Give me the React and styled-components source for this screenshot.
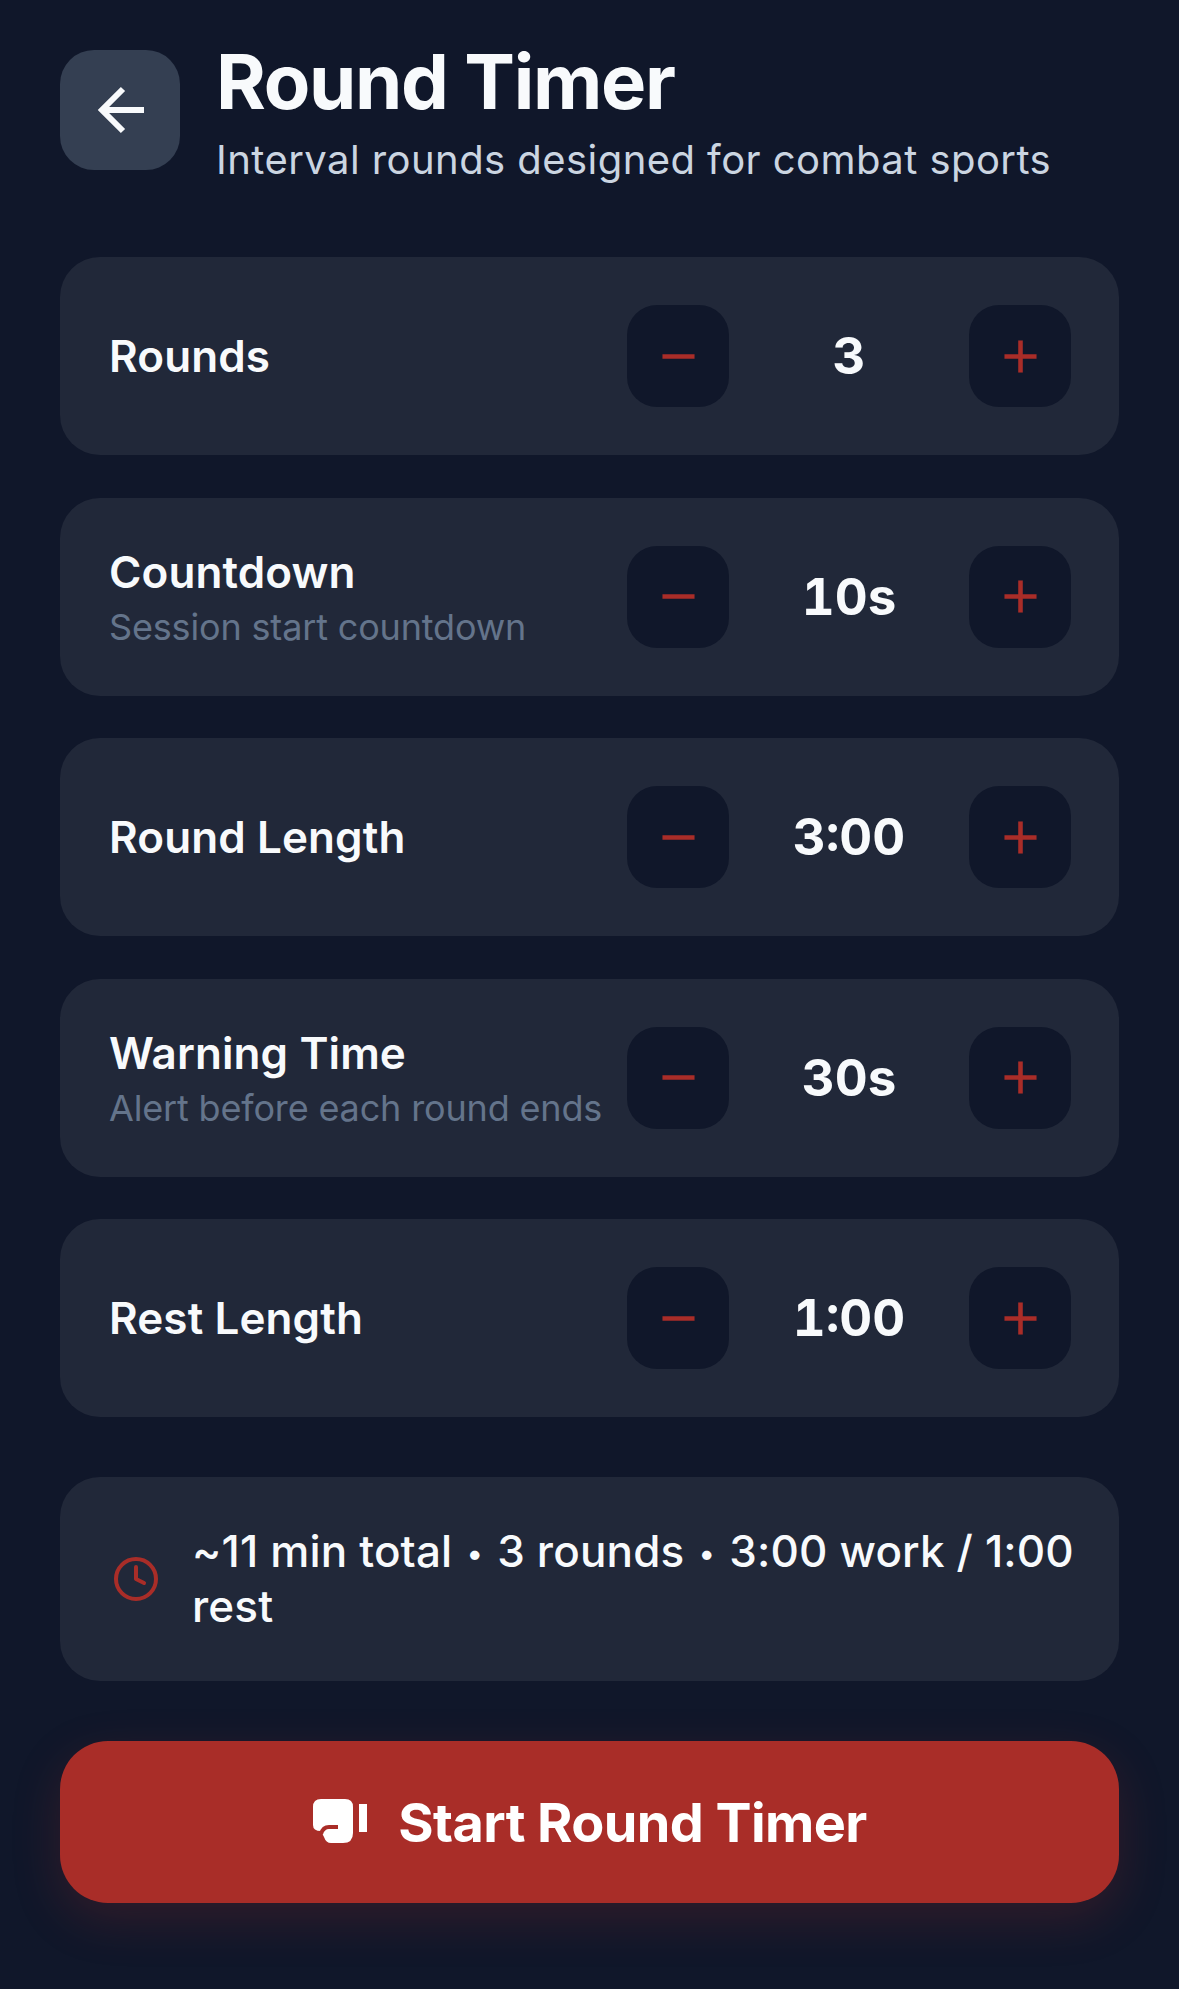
import React from 'react'
import styled, { createGlobalStyle } from 'styled-components'
import { ArrowLeft, Clock, Minus, Plus } from 'lucide-react'

const Red = '#a92d28'
const Ink = '#10172a'
const Panel = '#212839'

const GlobalStyle = createGlobalStyle`
  html, body {
    margin: 0;
    padding: 0;
    background: ${Ink};
  }
  * {
    box-sizing: border-box;
  }
`

const Page = styled.div`
  width: 1179px;
  height: 1989px;
  padding: 42px 60px 0;
  background: ${Ink};
  font-family: Inter, 'Liberation Sans', sans-serif;
  color: #f8fafc;
  overflow: hidden;
`

const Header = styled.header`
  display: flex;
  align-items: flex-start;
  gap: 36px;
  margin-bottom: 72px;
`

const BackButton = styled.button`
  width: 120px;
  height: 120px;
  margin-top: 8px;
  padding: 0 0 0 5px;
  flex: none;
  display: flex;
  align-items: center;
  justify-content: center;
  border: 0;
  border-radius: 34px;
  background: #343f52;
  color: #f8fafc;
`

const HeaderText = styled.div`
  display: flex;
  flex-direction: column;
`

const Title = styled.h1`
  margin: 0;
  font-size: 76px;
  line-height: 78px;
  font-weight: 700;
  letter-spacing: -1.3px;
`

const Subtitle = styled.p`
  margin: 15px 0 0;
  font-size: 40px;
  line-height: 50px;
  font-weight: 400;
  color: #cbd5e1;
  letter-spacing: 0.44px;
`

const Rows = styled.div`
  display: flex;
  flex-direction: column;
  gap: 42.5px;
`

const Row = styled.div`
  height: 198px;
  padding: 0 48px 0 49px;
  display: flex;
  align-items: center;
  justify-content: space-between;
  border-radius: 40px;
  background: ${Panel};
`

const LabelBlock = styled.div`
  display: flex;
  flex-direction: column;
`

const Label = styled.div`
  font-size: 44px;
  line-height: 54px;
  font-weight: 600;
  letter-spacing: 0.1px;
`

const Hint = styled.div`
  margin-top: 6px;
  font-size: 36px;
  line-height: 44px;
  font-weight: 400;
  color: #64748b;
  letter-spacing: -0.16px;
  white-space: nowrap;
`

const Stepper = styled.div`
  width: 444px;
  flex: none;
  display: flex;
  align-items: center;
`

const StepButton = styled.button`
  width: 102px;
  height: 102px;
  flex: none;
  display: flex;
  align-items: center;
  justify-content: center;
  border: 0;
  border-radius: 30px;
  background: ${Ink};
  color: ${Red};
`

const Value = styled.div`
  flex: 1;
  text-align: center;
  font-size: 51px;
  line-height: 60px;
  font-weight: 700;
  font-variant-numeric: tabular-nums;
`

const Summary = styled.div`
  height: 204px;
  margin-top: 60px;
  padding: 0 30px 0 52px;
  display: flex;
  align-items: center;
  gap: 32px;
  border-radius: 40px;
  background: ${Panel};
  color: ${Red};
`

const SummaryText = styled.div`
  font-size: 44px;
  line-height: 53px;
  font-weight: 500;
  color: #f8fafc;
  letter-spacing: 0.15px;
  white-space: nowrap;
`

const Dot = styled.span`
  font-size: 30px;
  margin: 0 2.5px;
  vertical-align: 3px;
`

const StartButton = styled.button`
  width: 100%;
  height: 162px;
  margin-top: 60px;
  display: flex;
  align-items: center;
  justify-content: center;
  gap: 30px;
  border: 0;
  border-radius: 48px;
  background: ${Red};
  box-shadow: 0 16px 48px rgba(169, 45, 40, 0.22);
  font-family: inherit;
  font-size: 54px;
  font-weight: 700;
  letter-spacing: -0.6px;
  color: #fff;
`

const settings = [
  { label: 'Rounds', value: '3' },
  { label: 'Countdown', hint: 'Session start countdown', value: '10s' },
  { label: 'Round Length', value: '3:00' },
  { label: 'Warning Time', hint: 'Alert before each round ends', value: '30s' },
  { label: 'Rest Length', value: '1:00' },
]

function Glove() {
  return (
    <svg width="56" height="48" viewBox="0 0 56 48" aria-hidden="true">
      <path
        d="M9 1H33Q41 1 41 9V35Q41 45 31 45H19Q14 45 12 39L9 33Q1 33 1 27V9Q1 1 9 1Z"
        fill="#fff"
      />
      <path
        d="M26 29H17Q11 29 9 36"
        fill="none"
        stroke={Red}
        strokeWidth="4"
      />
      <rect x="47" y="6" width="8" height="28" fill="#fff" />
    </svg>
  )
}

export default function App() {
  return (
    <Page>
      <GlobalStyle />
      <Header>
        <BackButton>
          <ArrowLeft size={72} strokeWidth={2} strokeLinecap="butt" strokeLinejoin="miter" />
        </BackButton>
        <HeaderText>
          <Title>Round Timer</Title>
          <Subtitle>Interval rounds designed for combat sports</Subtitle>
        </HeaderText>
      </Header>
      <Rows>
        {settings.map((s) => (
          <Row key={s.label}>
            <LabelBlock>
              <Label>{s.label}</Label>
              {s.hint && <Hint>{s.hint}</Hint>}
            </LabelBlock>
            <Stepper>
              <StepButton>
                <Minus size={55} strokeWidth={2} strokeLinecap="butt" />
              </StepButton>
              <Value>{s.value}</Value>
              <StepButton>
                <Plus size={55} strokeWidth={2} strokeLinecap="butt" />
              </StepButton>
            </Stepper>
          </Row>
        ))}
      </Rows>
      <Summary>
        <Clock size={48} strokeWidth={2} style={{ flex: 'none' }} />
        <SummaryText>
          ~11 min total <Dot>•</Dot> 3 rounds <Dot>•</Dot> 3:00 work / 1:00
          <br />
          rest
        </SummaryText>
      </Summary>
      <StartButton>
        <Glove />
        Start Round Timer
      </StartButton>
    </Page>
  )
}
